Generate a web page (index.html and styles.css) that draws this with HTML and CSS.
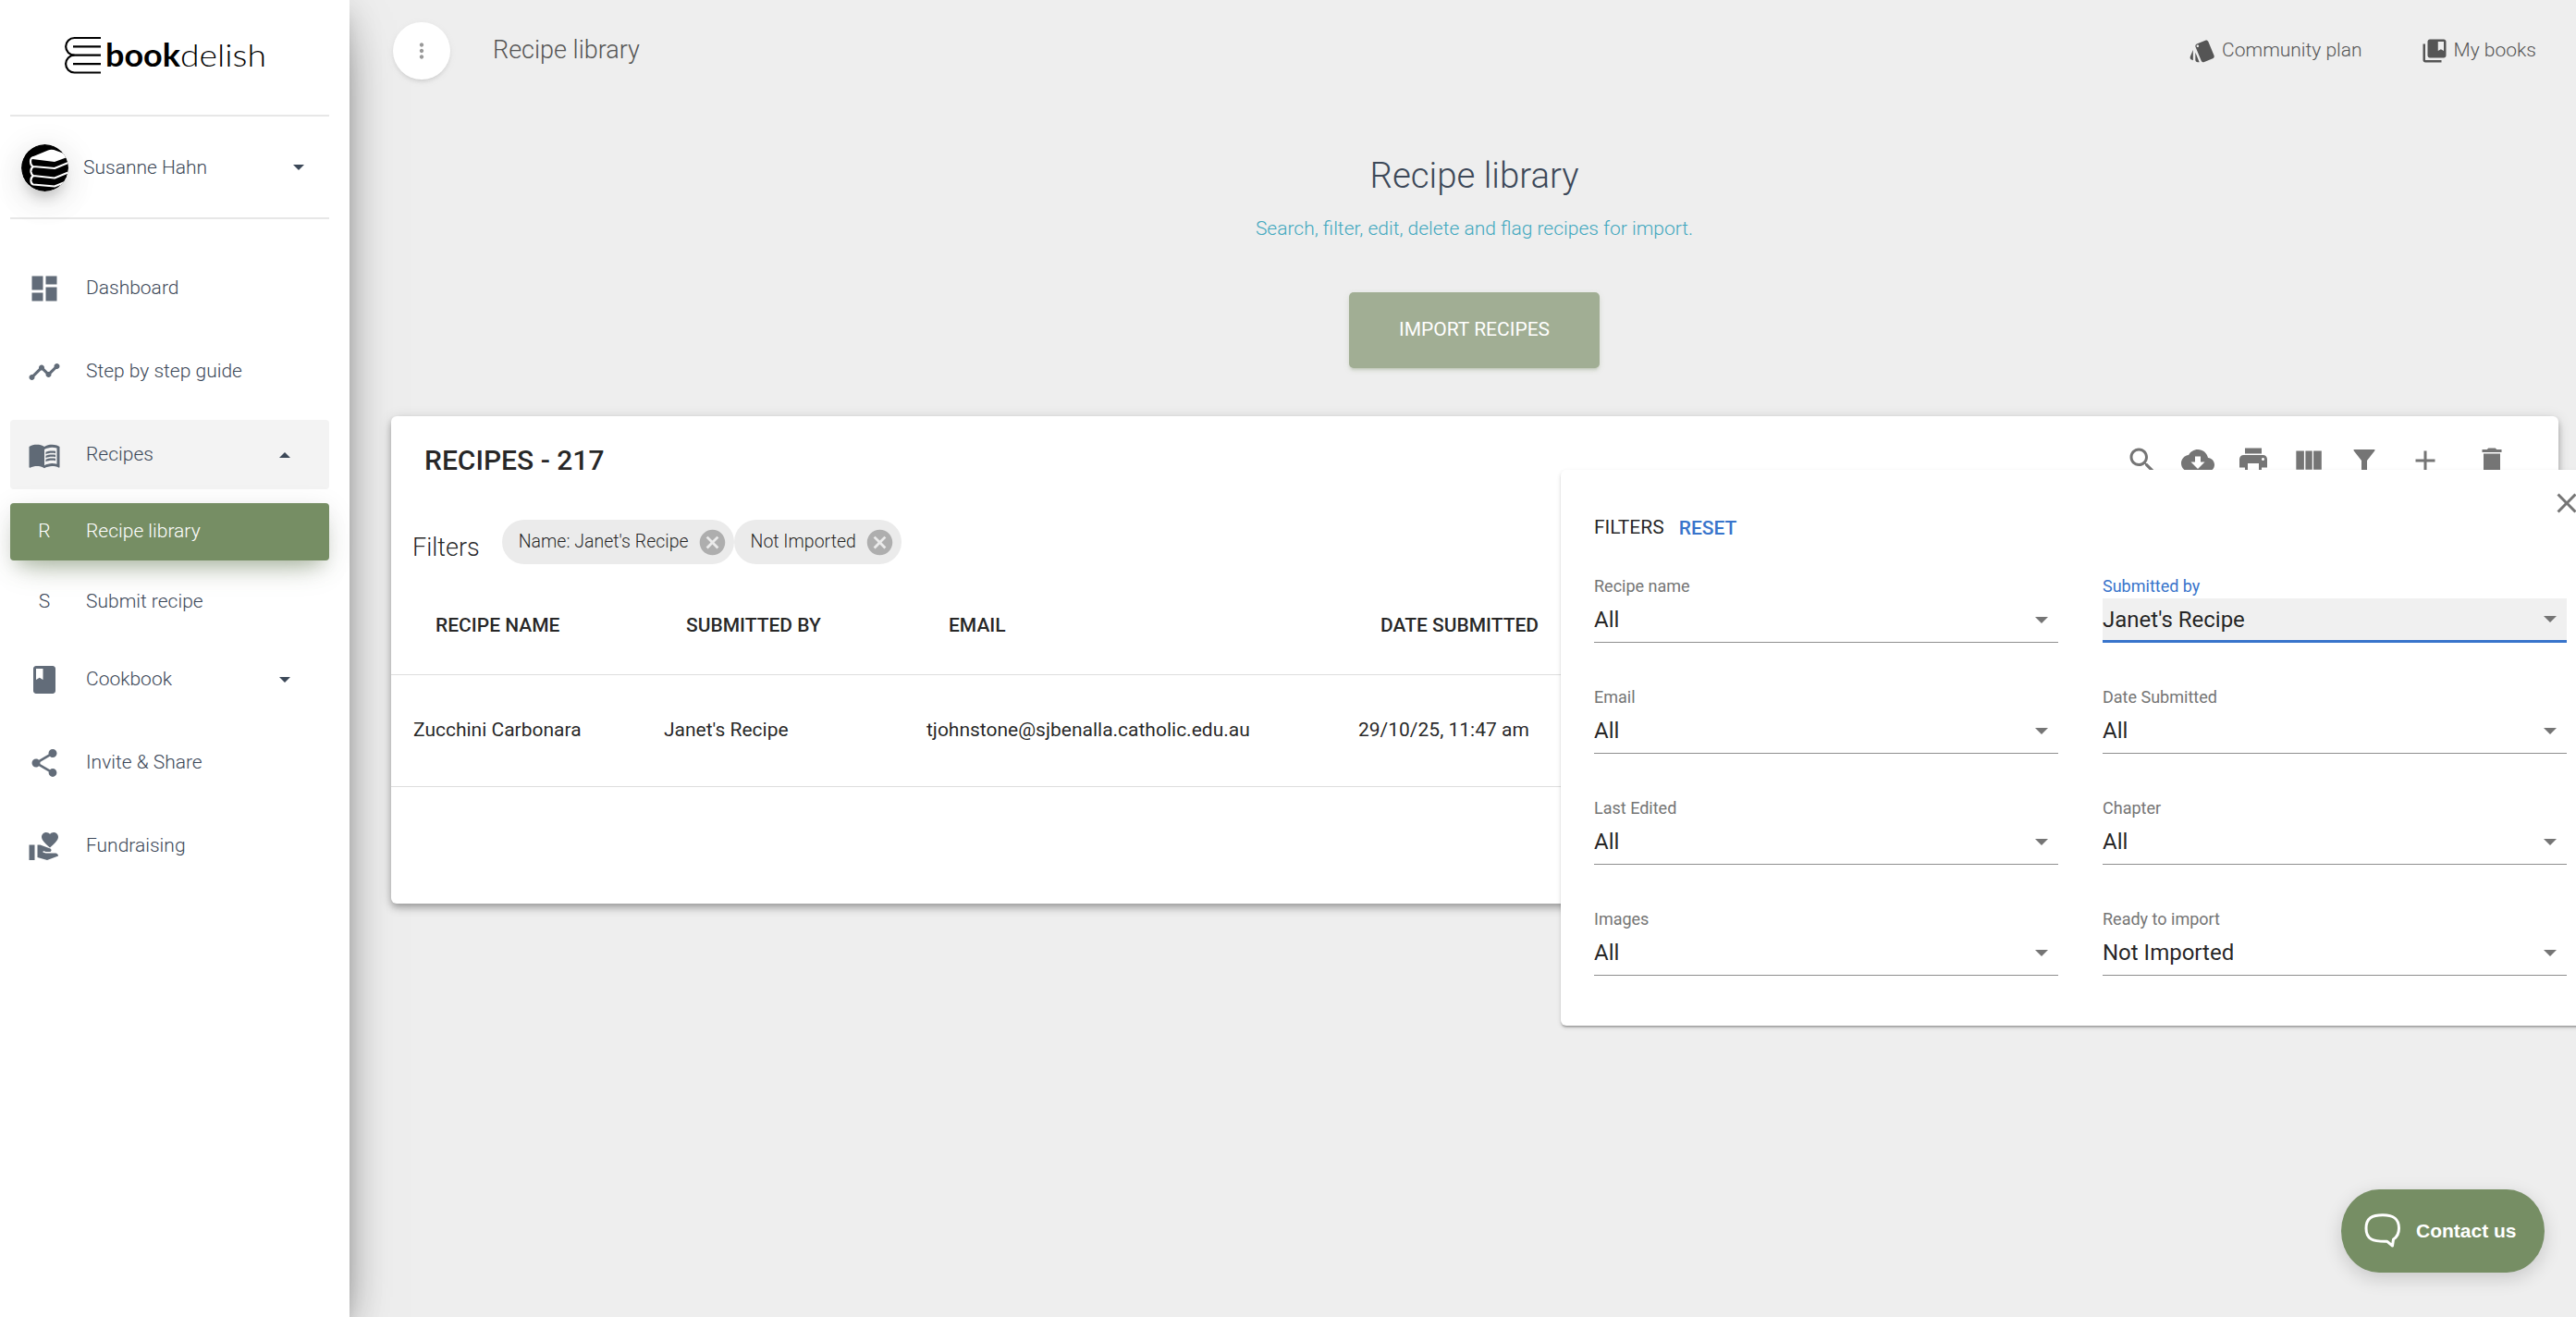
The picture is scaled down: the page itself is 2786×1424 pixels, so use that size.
FILE: index.html
```html
<!DOCTYPE html>
<html lang="en">
<head>
<meta charset="utf-8">
<title>Recipe library</title>
<link rel="stylesheet" href="styles.css">
</head>
<body>
<div class="app">
  <aside class="sidebar">
    <div class="brand">
      <svg class="brand-logo" viewBox="0 0 220 42" role="img" aria-label="bookdelish">
        <g fill="none" stroke="#000" stroke-width="2.2">
          <path d="M40 2H11.500A9.250 9.250 0 0 0 11.500 20.700H40"/>
          <path d="M11.500 20.700A9.250 9.250 0 0 0 11.500 39.500H40"/>
          <path d="M10 11.300H40M10 30.200H40"/>
        </g>
        <text class="brand-bold" x="45" y="32.500" textLength="81" lengthAdjust="spacingAndGlyphs">book</text>
        <text class="brand-light" x="126" y="32.500" textLength="93" lengthAdjust="spacingAndGlyphs">delish</text>
      </svg>
    </div>
    <div class="user">
      <svg class="avatar" viewBox="0 0 51 51">
        <defs><clipPath id="round"><circle cx="25.500" cy="25.500" r="25.500"/></clipPath></defs>
        <circle cx="25.500" cy="25.500" r="25.500"/>
        <g clip-path="url(#round)">
          <path fill="#fff" d="M12 13.500L29 6.500Q33 5 38 7L52 12V13L36 19L12 16Z"/>
          <path fill="none" stroke="#fff" stroke-width="2.200" stroke-linejoin="round" d="M14 14.500Q10 14 10 18.500Q10 23 13 24L36 26L52 19.500M13 24Q10 26 10.500 30Q11 33 13 34L36 36.500L52 30M13 34Q10 36 10.500 40Q11 43 13 43.500L36 45.500L52 39"/>
        </g>
      </svg>
      <span class="user-name">Susanne Hahn</span>
      <i class="caret"></i>
    </div>
    <nav class="nav">
      <a class="nav-item"><svg class="nav-icon" viewBox="0 0 24 24"><path d="M3 13h8V3H3v10zm0 8h8v-6H3v6zm10 0h8V11h-8v10zm0-18v6h8V3h-8z"/></svg><span>Dashboard</span></a>
      <a class="nav-item"><svg class="nav-icon" viewBox="0 0 24 24"><path d="M23 8c0 1.100-.9 2-2 2-.18 0-.35-.02-.51-.07l-3.560 3.550c.05.16.07.34.07.52 0 1.100-.9 2-2 2s-2-.9-2-2c0-.18.02-.36.07-.52l-2.550-2.550c-.16.05-.34.07-.52.07s-.36-.02-.52-.07l-4.550 4.560c.05.16.07.33.07.51 0 1.100-.9 2-2 2s-2-.9-2-2 .9-2 2-2c.18 0 .35.02.51.07l4.560-4.550C8.020 9.360 8 9.180 8 9c0-1.100.9-2 2-2s2 .9 2 2c0 .18-.02.36-.07.52l2.550 2.550c.16-.05.34-.07.52-.07s.36.02.52.07l3.550-3.560C19.020 8.350 19 8.180 19 8c0-1.100.9-2 2-2s2 .9 2 2z"/></svg><span>Step by step guide</span></a>
      <a class="nav-item nav-open"><svg class="nav-icon" viewBox="0 0 24 24"><path d="M21 5c-1.110-.35-2.330-.5-3.500-.5-1.950 0-4.050.4-5.500 1.500-1.450-1.100-3.550-1.500-5.500-1.500S2.450 4.900 1 6v14.650c0 .25.25.5.5.5.1 0 .15-.05.25-.05C3.100 20.450 5.050 20 6.500 20c1.950 0 4.050.4 5.500 1.500 1.350-.85 3.800-1.500 5.500-1.500 1.650 0 3.350.3 4.750 1.050.1.05.15.05.25.05.25 0 .5-.25.5-.5V6c-.6-.45-1.250-.75-2-1zm0 13.500c-1.100-.35-2.300-.5-3.500-.5-1.700 0-4.150.65-5.500 1.500V8c1.350-.85 3.800-1.500 5.500-1.500 1.200 0 2.400.15 3.500.5v11.500z"/><path d="M17.500 10.500c.88 0 1.730.09 2.500.26V9.240c-.79-.15-1.640-.24-2.500-.24-1.700 0-3.240.29-4.500.83v1.660c1.130-.64 2.700-.99 4.500-.99zM13 12.490v1.660c1.130-.64 2.700-.99 4.500-.99.88 0 1.730.09 2.500.26V11.900c-.79-.15-1.640-.24-2.500-.24-1.700 0-3.240.3-4.500.83zM17.500 14.330c-1.700 0-3.240.29-4.500.83v1.660c1.130-.64 2.700-.99 4.500-.99.88 0 1.730.09 2.500.26v-1.520c-.79-.16-1.640-.24-2.500-.24z"/></svg><span>Recipes</span><i class="caret caret-up"></i></a>
      <a class="nav-item nav-sub nav-active"><b class="nav-letter">R</b><span>Recipe library</span></a>
      <a class="nav-item nav-sub"><b class="nav-letter">S</b><span>Submit recipe</span></a>
      <a class="nav-item"><svg class="nav-icon" viewBox="0 0 24 24"><path d="M18 2H6c-1.100 0-2 .9-2 2v16c0 1.100.9 2 2 2h12c1.100 0 2-.9 2-2V4c0-1.100-.9-2-2-2zM6 4h5v8l-2.500-1.500L6 12V4z"/></svg><span>Cookbook</span><i class="caret"></i></a>
      <a class="nav-item"><svg class="nav-icon" viewBox="0 0 24 24"><path d="M18 16.080c-.76 0-1.440.3-1.960.77L8.910 12.700c.05-.23.09-.46.09-.7s-.04-.47-.09-.7l7.050-4.110c.54.5 1.250.81 2.040.81 1.660 0 3-1.340 3-3s-1.340-3-3-3-3 1.340-3 3c0 .24.04.47.09.7L8.040 9.810C7.500 9.310 6.790 9 6 9c-1.660 0-3 1.340-3 3s1.340 3 3 3c.79 0 1.500-.31 2.040-.81l7.120 4.160c-.05.21-.08.43-.08.65 0 1.610 1.310 2.920 2.920 2.920s2.920-1.310 2.920-2.920-1.310-2.920-2.920-2.920z"/></svg><span>Invite &amp; Share</span></a>
      <a class="nav-item"><svg class="nav-icon" viewBox="0 0 24 24"><path d="M1 11h4v11H1zM16 3.250C16.650 2.490 17.660 2 18.700 2 20.550 2 22 3.450 22 5.300c0 2.270-2.910 4.900-6 7.700-3.090-2.810-6-5.440-6-7.700C10 3.450 11.450 2 13.300 2c1.040 0 2.050.49 2.700 1.250zM20 17h-7l-2.090-.73.33-.94L13 16h2.820c.65 0 1.180-.53 1.180-1.180 0-.49-.31-.93-.77-1.110L8.970 11H7v9.020L14 22l8.010-3c-.01-1.100-.9-2-2.010-2z"/></svg><span>Fundraising</span></a>
    </nav>
  </aside>

  <main class="main">
    <header class="topbar">
      <button class="more"><svg viewBox="0 0 24 24"><path d="M12 8c1.100 0 2-.9 2-2s-.9-2-2-2-2 .9-2 2 .9 2 2 2zm0 2c-1.100 0-2 .9-2 2s.9 2 2 2 2-.9 2-2-.9-2-2-2zm0 6c-1.100 0-2 .9-2 2s.9 2 2 2 2-.9 2-2-.9-2-2-2z"/></svg></button>
      <span class="page-name">Recipe library</span>
      <a class="top-link"><svg viewBox="0 0 24 24"><path d="M2.530 19.650l1.340.56v-9.030l-2.430 5.860c-.41 1.020.08 2.190 1.090 2.610zm19.500-3.700L17.070 3.980c-.31-.75-1.040-1.210-1.810-1.230-.26 0-.53.04-.79.15L7.100 5.950c-.75.31-1.210 1.030-1.230 1.800-.01.27.04.54.15.8l4.960 11.970c.31.76 1.050 1.220 1.830 1.230.26 0 .52-.05.77-.15l7.360-3.050c1.020-.42 1.510-1.590 1.090-2.600zM7.880 8.750c-.55 0-1-.45-1-1s.45-1 1-1 1 .45 1 1-.45 1-1 1zm-2 11c0 1.100.9 2 2 2h1.450l-3.450-8.340v6.340z"/></svg>Community plan</a>
      <a class="top-link"><svg viewBox="0 0 24 24"><path d="M4 6H2v14c0 1.100.9 2 2 2h14v-2H4V6z"/><path d="M20 2H8c-1.100 0-2 .9-2 2v12c0 1.100.9 2 2 2h12c1.100 0 2-.9 2-2V4c0-1.100-.9-2-2-2zm0 10l-2.500-1.500L15 12V4h5v8z"/></svg>My books</a>
    </header>

    <section class="hero">
      <h1>Recipe library</h1>
      <p>Search, filter, edit, delete and flag recipes for import.</p>
      <button class="import">IMPORT RECIPES</button>
    </section>

    <section class="card">
      <div class="card-head">
        <h2>RECIPES - 217</h2>
        <div class="tools">
          <svg viewBox="0 0 24 24"><path d="M15.500 14h-.79l-.28-.27C15.410 12.590 16 11.110 16 9.500 16 5.910 13.090 3 9.500 3S3 5.910 3 9.500 5.910 16 9.500 16c1.610 0 3.090-.59 4.230-1.570l.27.28v.79l5 4.990L20.490 19l-4.990-5zm-6 0C7.010 14 5 11.990 5 9.500S7.010 5 9.500 5 14 7.010 14 9.500 11.990 14 9.500 14z"/></svg>
          <svg viewBox="0 0 24 24"><path d="M19.350 10.040C18.670 6.590 15.640 4 12 4 9.110 4 6.600 5.640 5.350 8.040 2.340 8.360 0 10.910 0 14c0 3.310 2.690 6 6 6h13c2.760 0 5-2.240 5-5 0-2.640-2.050-4.780-4.650-4.960zM17 13l-5 5-5-5h3V9h4v4h3z"/></svg>
          <svg viewBox="0 0 24 24"><path d="M19 8H5c-1.660 0-3 1.340-3 3v6h4v4h12v-4h4v-6c0-1.660-1.340-3-3-3zm-3 11H8v-5h8v5zm3-7c-.55 0-1-.45-1-1s.45-1 1-1 1 .45 1 1-.45 1-1 1zm-1-9H6v4h12V3z"/></svg>
          <svg viewBox="0 0 24 24"><path d="M9.600 18.500h4.900V5H9.600zM2.900 18.500h5.700V5H2.900zM15.400 5v13.500h5.800V5z"/></svg>
          <svg viewBox="0 0 24 24"><path d="M4.800 4Q4 4 4.400 4.800L10 12v7q0 1 1 1h2q1 0 1-1v-7L19.600 4.800Q20 4 19.200 4z"/></svg>
          <svg class="tool-add" viewBox="0 0 24 24"><path d="M19 13h-6v6h-2v-6H5v-2h6V5h2v6h6v2z"/></svg>
          <svg class="tool-delete" viewBox="0 0 24 24"><path d="M6 19c0 1.100.9 2 2 2h8c1.100 0 2-.9 2-2V7H6v12zM19 4h-3.500l-1-1h-5l-1 1H5v2h14V4z"/></svg>
        </div>
      </div>
      <div class="chips">
        <span class="chips-label">Filters</span>
        <span class="chip">Name: Janet's Recipe<svg viewBox="0 0 24 24"><path d="M12 2C6.470 2 2 6.470 2 12s4.470 10 10 10 10-4.470 10-10S17.530 2 12 2zm5 13.590L15.590 17 12 13.410 8.410 17 7 15.590 10.590 12 7 8.410 8.410 7 12 10.590 15.590 7 17 8.410 13.410 12 17 15.590z"/></svg></span>
        <span class="chip">Not Imported<svg viewBox="0 0 24 24"><path d="M12 2C6.470 2 2 6.470 2 12s4.470 10 10 10 10-4.470 10-10S17.530 2 12 2zm5 13.590L15.590 17 12 13.410 8.410 17 7 15.590 10.590 12 7 8.410 8.410 7 12 10.590 15.590 7 17 8.410 13.410 12 17 15.590z"/></svg></span>
      </div>
      <table class="table">
        <colgroup><col class="c-name"><col class="c-by"><col class="c-mail"><col></colgroup>
        <thead><tr><th>RECIPE NAME</th><th>SUBMITTED BY</th><th>EMAIL</th><th>DATE SUBMITTED</th></tr></thead>
        <tbody><tr><td>Zucchini Carbonara</td><td>Janet's Recipe</td><td>tjohnstone@sjbenalla.catholic.edu.au</td><td>29/10/25, 11:47 am</td></tr></tbody>
      </table>
    </section>
  </main>

  <div class="popover">
    <svg class="close" viewBox="0 0 24 24"><path d="M19 6.410L17.590 5 12 10.590 6.410 5 5 6.410 10.590 12 5 17.590 6.410 19 12 13.410 17.590 19 19 17.590 13.410 12z"/></svg>
    <div class="popover-head"><span>FILTERS</span><button class="reset">RESET</button></div>
    <div class="fields">
      <div class="field"><label>Recipe name</label><div class="select">All<i class="arrow"></i></div></div>
      <div class="field field-focus"><label>Submitted by</label><div class="select">Janet's Recipe<i class="arrow"></i></div></div>
      <div class="field"><label>Email</label><div class="select">All<i class="arrow"></i></div></div>
      <div class="field"><label>Date Submitted</label><div class="select">All<i class="arrow"></i></div></div>
      <div class="field"><label>Last Edited</label><div class="select">All<i class="arrow"></i></div></div>
      <div class="field"><label>Chapter</label><div class="select">All<i class="arrow"></i></div></div>
      <div class="field"><label>Images</label><div class="select">All<i class="arrow"></i></div></div>
      <div class="field"><label>Ready to import</label><div class="select">Not Imported<i class="arrow"></i></div></div>
    </div>
  </div>

  <button class="contact">
    <svg viewBox="0 0 40 38"><path fill="none" stroke="#fff" stroke-width="3" stroke-linejoin="round" d="M20 1.700C31 1.700 37.500 5 37.500 16C37.500 22 35.500 25.500 31.500 28L30.500 35L24.500 30.200C9 30.500 2 28 2 16C2 5 8.500 1.700 20 1.700Z"/></svg>
    Contact us
  </button>
</div>
</body>
</html>
```
FILE: styles.css
```css
* { box-sizing: border-box; }

body {
  margin: 0;
  overflow: hidden;
  background: #eee;
  color: #3c4858;
  font: 300 21px/30px Roboto, "Liberation Sans", sans-serif;
}

h1, h2, p { margin: 0; }
button { border: 0; padding: 0; font: inherit; }
svg { display: block; flex: none; fill: currentColor; }

.app {
  position: relative;
  display: flex;
  width: 2786px;
  height: 1424px;
  overflow: hidden;
}

/* Sidebar */
.sidebar {
  width: 378px;
  flex: none;
  padding: 0 22px 0 11px;
  background: #fff;
  box-shadow: 0 24px 57px -18px rgba(0,0,0,.56), 0 6px 37px 0 rgba(0,0,0,.12), 0 12px 15px -7px rgba(0,0,0,.2);
}
.brand { height: 126px; padding: 39px 0 0 58px; border-bottom: 2px solid #e7e7e7; }
.brand-logo { width: 220px; height: 42px; }
.brand-logo text { fill: #000; font-family: Lato, sans-serif; font-size: 34px; }
.brand-bold { font-weight: 700; }
.brand-light { font-weight: 300; }

.user {
  display: flex;
  align-items: center;
  height: 111px;
  padding: 1px 27px 0 12px;
  border-bottom: 2px solid #e7e7e7;
}
.avatar {
  width: 51px;
  height: 51px;
  margin-right: 16px;
  border-radius: 50%;
  color: #000;
  box-shadow: 0 15px 45px -18px rgba(0,0,0,.42), 0 6px 37px 0 rgba(0,0,0,.12), 0 12px 15px -7px rgba(0,0,0,.2);
}
.user-name { padding-bottom: 1px; }

.caret { margin-left: auto; border: 6px solid transparent; border-top-color: #3c4858; border-bottom: 0; }
.caret-up { border-top: 0; border-bottom: 6px solid #3c4858; }

.nav { display: flex; flex-direction: column; gap: 15px; padding-top: 37px; }
.nav-item {
  display: flex;
  align-items: center;
  height: 75px;
  padding: 0 42px 0 19px;
  border-radius: 4px;
}
.nav-item span { padding-bottom: 2px; }
.nav-icon { width: 36px; height: 36px; margin-right: 27px; color: #3c4858; opacity: .8; }
.nav-open { background: #f3f3f3; }
.nav-sub { height: 61.500px; }
.nav-letter { width: 36px; margin-right: 27px; padding-bottom: 2px; font-weight: 300; text-align: center; }
.nav-active {
  background: #768e64;
  color: #fff;
  box-shadow: 0 18px 30px -15px rgba(118,142,100,.5), 0 6px 30px 0 rgba(0,0,0,.1), 0 12px 15px -7px rgba(118,142,100,.2);
}

/* Page header */
.main { flex: 1; min-width: 0; padding: 24px 19px 0 45px; }
.topbar { display: flex; align-items: center; height: 62px; margin-left: 2px; padding-right: 24px; color: #555; }
.more {
  display: grid;
  place-items: center;
  width: 62px;
  height: 62px;
  border-radius: 50%;
  background: #fff;
  color: #999;
  box-shadow: 0 3px 3px 0 rgba(153,153,153,.14), 0 4px 2px -3px rgba(153,153,153,.2), 0 2px 7px 0 rgba(153,153,153,.12);
}
.more svg { width: 26px; height: 26px; margin-right: 1px; }
.page-name { margin: 0 auto 2px 46px; font-size: 27px; }
.top-link { display: flex; align-items: center; gap: 6px; margin: 0 0 2px 63px; }
.top-link svg { width: 30px; height: 30px; margin-top: 1px; }

.hero { display: flex; flex-direction: column; align-items: center; padding: 78px 1px 0 0; }
.hero h1 { font-size: 38.400px; font-weight: 300; line-height: 52px; }
.hero p { margin-top: 13px; line-height: 36px; color: #42a8be; }
.import {
  width: 271px;
  height: 82px;
  margin-top: 51px;
  padding-bottom: 2px;
  border-radius: 5px;
  background: #a1ae94;
  color: #fff;
  font-weight: 400;
  box-shadow: 0 3px 3px 0 rgba(118,142,100,.14), 0 4px 2px -3px rgba(118,142,100,.2), 0 2px 7px 0 rgba(118,142,100,.12);
}

/* Table card */
.card {
  height: 527px;
  margin-top: 52px;
  border-radius: 6px;
  background: #fff;
  color: rgba(0,0,0,.87);
  box-shadow: 0 3px 6px -1px rgba(0,0,0,.2), 0 6px 8px 0 rgba(0,0,0,.14), 0 2px 15px 0 rgba(0,0,0,.12);
}
.card-head { display: flex; align-items: center; justify-content: space-between; height: 96px; padding: 0 54px 0 36px; }
.card-head h2 { padding-bottom: 1px; font-size: 30px; font-weight: 500; }
.tools { display: flex; gap: 24px; color: #757575; }
.tools svg { width: 36px; height: 36px; }
.tool-add { margin-left: 6px; }
.tool-delete { margin-left: 12px; }

.chips { display: flex; align-items: center; height: 80px; padding-left: 23px; }
.chips-label { margin: 12px 24px 0 0; font-size: 27px; }
.chip {
  display: flex;
  align-items: center;
  gap: 9px;
  height: 48px;
  padding: 0 7px 0 18px;
  border-radius: 24px;
  background: #ebebeb;
  font-size: 19.500px;
}
.chip svg { width: 33px; height: 33px; color: #aeaeae; }

.table { width: 100%; border-collapse: collapse; table-layout: fixed; font-weight: 400; }
.c-name { width: 271px; }
.c-by { width: 284px; }
.c-mail { width: 467px; }
.table th, .table td { padding: 0 24px 1px; border-bottom: 1px solid #dedede; text-align: left; }
.table th { height: 103px; padding-left: 48px; padding-bottom: 2px; font-weight: 500; }
.table td { height: 121px; }

/* Filter popover */
.popover {
  position: absolute;
  left: 1688px;
  top: 508px;
  width: 1134px;
  height: 601px;
  padding: 47px 46px 0 36px;
  border-radius: 6px;
  background: #fff;
  color: rgba(0,0,0,.87);
  font-weight: 400;
  box-shadow: 0 3px 2px -2px rgba(0,0,0,.2), 0 2px 2px 0 rgba(0,0,0,.14), 0 2px 5px 0 rgba(0,0,0,.12);
}
.close { position: absolute; left: 1070px; top: 18px; width: 36px; height: 36px; color: #757575; }
.popover-head { display: flex; gap: 16px; }
.reset { height: 32px; background: none; color: #3874cb; font-weight: 500; }
.fields { display: grid; grid-template-columns: 502px 502px; column-gap: 48px; row-gap: 60px; padding-top: 36px; }
.field { height: 60px; }
.field:nth-child(n) label { display: block; height: 24px; font-size: 18px; line-height: 22px; color: #757575; }
.select {
  display: flex;
  align-items: center;
  justify-content: space-between;
  height: 48px;
  padding: 0 11px 1px 0;
  border-bottom: 1px solid #8f8f8f;
  font-size: 24px;
}
.arrow { border: 7.500px solid transparent; border-top-color: #757575; border-bottom: 0; }
.fields .field-focus label { color: #3874cb; }
.field-focus .select { padding-bottom: 0; background: #f0f0f0; border-bottom: 3px solid #3874cb; }

/* Chat launcher */
.contact {
  position: absolute;
  left: 2532px;
  top: 1286px;
  display: flex;
  align-items: center;
  gap: 16px;
  width: 220px;
  height: 90px;
  padding-left: 25px;
  border-radius: 41px / 45px;
  background: #768e64;
  color: #fff;
  font: 700 21px/30px "Liberation Sans", sans-serif;
  box-shadow: 0 6px 20px rgba(0,0,0,.16);
}
.contact svg { width: 40px; height: 38px; }
```
